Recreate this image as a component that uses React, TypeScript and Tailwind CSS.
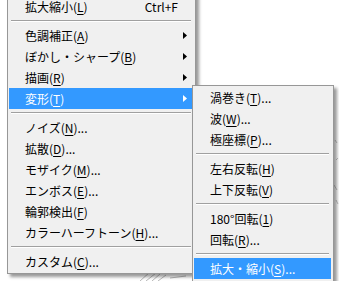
type Item =
  | { sep: true }
  | { label: string; key?: string; after?: string; sub?: boolean; shortcut?: string; active?: boolean; sep?: false };

const mainItems: Item[] = [
  { label: "拡大縮小", key: "L", shortcut: "Ctrl+F" },
  { sep: true },
  { label: "色調補正", key: "A", sub: true },
  { label: "ぼかし・シャープ", key: "B", sub: true },
  { label: "描画", key: "R", sub: true },
  { label: "変形", key: "T", sub: true, active: true },
  { sep: true },
  { label: "ノイズ", key: "N", after: "..." },
  { label: "拡散", key: "D", after: "..." },
  { label: "モザイク", key: "M", after: "..." },
  { label: "エンボス", key: "E", after: "..." },
  { label: "輪郭検出", key: "F" },
  { label: "カラーハーフトーン", key: "H", after: "..." },
  { sep: true },
  { label: "カスタム", key: "C", after: "..." },
];

const subItems: Item[] = [
  { label: "渦巻き", key: "T", after: "..." },
  { label: "波", key: "W", after: "..." },
  { label: "極座標", key: "P", after: "..." },
  { sep: true },
  { label: "左右反転", key: "H" },
  { label: "上下反転", key: "V" },
  { sep: true },
  { label: "180°回転", key: "1" },
  { label: "回転", key: "R", after: "..." },
  { sep: true },
  { label: "拡大・縮小", key: "S", after: "...", active: true },
];

function Arrow({ white }: { white?: boolean }) {
  return (
    <svg width="4" height="7" viewBox="0 0 4 7" className="ml-auto mr-[6px]">
      <path d="M0 0 L4 3.5 L0 7 Z" fill={white ? "#ffffff" : "#000000"} />
    </svg>
  );
}

function MenuRows({ items }: { items: Item[] }) {
  return (
    <>
      {items.map((it, i) =>
        it.sep ? (
          <div key={i} className="h-[8px] flex items-center px-[2px]">
            <div className="w-full border-t border-[#a0a0a0] border-b border-b-white" />
          </div>
        ) : (
          <div
            key={i}
            className={
              "h-[21px] flex items-center pl-[16px] whitespace-nowrap " +
              (it.active ? "bg-[#3399ff] text-white" : "text-black")
            }
          >
            <span>
              {it.label}(<span className="underline underline-offset-2">{it.key}</span>){it.after}
            </span>
            {it.shortcut && <span className="ml-auto pr-[15px]">{it.shortcut}</span>}
            {it.sub && <Arrow white={it.active} />}
          </div>
        )
      )}
    </>
  );
}

export default function App() {
  return (
    <div
      className="relative w-[339px] h-[281px] overflow-hidden bg-white text-[12px] leading-none"
      style={{ fontFamily: '"Noto Sans CJK JP", "Noto Sans", sans-serif' }}
    >
      {/* sketchy canvas marks */}
      <svg className="absolute left-0 top-0" width="339" height="281">
        <path d="M140 281 L150 272 M146 281 L156 273 M152 281 L160 274 M158 281 L166 275 M170 278 L186 276" stroke="#b9b9b9" strokeWidth="1" fill="none" />
        <path d="M335 140 L337 143 M336 160 L338 158 M334 185 L337 190 M336 200 L338 204" stroke="#c4c4c4" strokeWidth="1" fill="none" />
      </svg>

      {/* main menu */}
      <div className="absolute left-[7px] top-[-6px] w-[189px] bg-[#f0f0f0] border border-[#979797] pl-[1px] pr-[2px] py-[1px] shadow-[3px_3px_3px_rgba(0,0,0,0.4)]">
        <MenuRows items={mainItems} />
      </div>

      {/* submenu */}
      <div className="absolute left-[192px] top-[85px] w-[142px] bg-[#f0f0f0] border border-[#979797] pl-[1px] pr-[2px] pt-[1px] pb-[3px] shadow-[3px_3px_3px_rgba(0,0,0,0.4)]">
        <MenuRows items={subItems} />
      </div>
    </div>
  );
}
